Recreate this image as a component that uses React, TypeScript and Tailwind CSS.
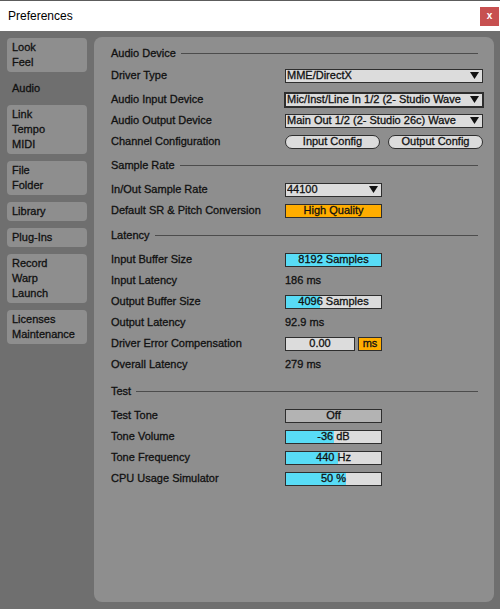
import type { ReactNode } from "react";

const navGroups = [
  ["Look", "Feel"],
  ["Audio"],
  ["Link", "Tempo", "MIDI"],
  ["File", "Folder"],
  ["Library"],
  ["Plug-Ins"],
  ["Record", "Warp", "Launch"],
  ["Licenses", "Maintenance"],
];

function Arrow() {
  return (
    <svg width="9" height="7" viewBox="0 0 9 7" className="shrink-0">
      <polygon points="0,0 9,0 4.5,7" fill="#111" />
    </svg>
  );
}

function Dropdown({ value, wide = true, focused = false }: { value: string; wide?: boolean; focused?: boolean }) {
  const size = wide
    ? focused
      ? "w-[200px] h-[16px] border-2 -ml-px"
      : "w-[198px] h-[14px] border"
    : "w-[97px] h-[14px] border";
  return (
    <div className={`${size} border-[#2e2e2e] bg-[#dcdcdc] flex items-center justify-between pl-[1px] pr-[3px] leading-none`}>
      <span className="whitespace-nowrap overflow-hidden">{value}</span>
      <Arrow />
    </div>
  );
}

function Field({ value, fill, bg = "bg-[#dcdcdc]", width = "w-[97px]" }: { value: string; fill?: number; bg?: string; width?: string }) {
  return (
    <div className={`relative ${width} h-[14px] border border-[#2e2e2e] ${bg} overflow-hidden`}>
      {fill !== undefined && <div className="absolute inset-y-0 left-0 bg-[#58dcf6]" style={{ width: `${fill}%` }} />}
      <div className="relative h-full flex items-center justify-center leading-none">{value}</div>
    </div>
  );
}

function Header({ title, className = "" }: { title: string; className?: string }) {
  return (
    <div className={`h-[21px] flex items-center gap-[5px] mr-[6px] ${className}`}>
      <span className="whitespace-nowrap">{title}</span>
      <div className="flex-1 h-px bg-[#4c4c4c]" />
    </div>
  );
}

function Row({ label, children, className = "" }: { label: string; children: ReactNode; className?: string }) {
  return (
    <div className={`h-[21px] flex items-center ${className}`}>
      <span className="w-[174px] shrink-0 whitespace-nowrap">{label}</span>
      {children}
    </div>
  );
}

export default function App() {
  return (
    <div className="w-[500px] h-[609px] bg-[#6f6f6f] flex flex-col text-[11px] text-[#111] font-['Liberation_Sans',Arial,sans-serif]">
      <div className="h-[31px] shrink-0 bg-white border-t border-[#5c5c5c] flex items-center justify-between pl-[8px] pr-[1px]">
        <span className="text-[12px] text-black">Preferences</span>
        <div className="w-[19px] h-[19px] bg-[#c75050] text-white text-[10px] font-bold flex items-center justify-center leading-none pb-[1px]">
          x
        </div>
      </div>

      <div className="flex-1 flex gap-[7px] px-[7px] pt-[6px] pb-[7px] min-h-0 [-webkit-text-stroke:0.3px_#111]">
        <div className="w-[80px] shrink-0 flex flex-col gap-[7px] mt-[1px]">
          {navGroups.map((group) => (
            <div
              key={group[0]}
              className={`rounded-[4px] px-[5px] py-[2px] ${group[0] === "Audio" ? "" : "bg-[#8e8e8e]"}`}
            >
              {group.map((item) => (
                <div key={item} className="h-[15px] leading-[15px]">
                  {item}
                </div>
              ))}
            </div>
          ))}
        </div>

        <div className="flex-1 bg-[#8e8e8e] rounded-[8px] pl-[17px] pr-[10px] pt-[6px]">
          <Header title="Audio Device" />
          <Row label="Driver Type" className="mt-[1px]">
            <Dropdown value="MME/DirectX" />
          </Row>
          <Row label="Audio Input Device" className="mt-[3px]">
            <Dropdown value="Mic/Inst/Line In 1/2 (2- Studio Wave" focused />
          </Row>
          <Row label="Audio Output Device">
            <Dropdown value="Main Out 1/2 (2- Studio 26c) Wave" />
          </Row>
          <Row label="Channel Configuration">
            <div className="flex gap-[8px]">
              <div className="w-[95px] h-[14px] rounded-full border border-[#2e2e2e] bg-[#dcdcdc] flex items-center justify-center leading-none">
                Input Config
              </div>
              <div className="w-[95px] h-[14px] rounded-full border border-[#2e2e2e] bg-[#dcdcdc] flex items-center justify-center leading-none">
                Output Config
              </div>
            </div>
          </Row>

          <Header title="Sample Rate" className="mt-[3px]" />
          <Row label="In/Out Sample Rate" className="mt-[3px]">
            <Dropdown value="44100" wide={false} />
          </Row>
          <Row label="Default SR & Pitch Conversion">
            <Field value="High Quality" bg="bg-[#ffad00]" />
          </Row>

          <Header title="Latency" className="mt-[4px]" />
          <Row label="Input Buffer Size" className="mt-[3px]">
            <Field value="8192 Samples" fill={100} />
          </Row>
          <Row label="Input Latency">
            <span>186 ms</span>
          </Row>
          <Row label="Output Buffer Size">
            <Field value="4096 Samples" fill={36} />
          </Row>
          <Row label="Output Latency">
            <span>92.9 ms</span>
          </Row>
          <Row label="Driver Error Compensation">
            <div className="flex gap-[3px]">
              <Field value="0.00" width="w-[70px]" />
              <Field value="ms" width="w-[24px]" bg="bg-[#ffad00]" />
            </div>
          </Row>
          <Row label="Overall Latency">
            <span>279 ms</span>
          </Row>

          <Header title="Test" className="mt-[6px]" />
          <Row label="Test Tone" className="mt-[3px]">
            <Field value="Off" bg="bg-[#b3b3b3]" />
          </Row>
          <Row label="Tone Volume">
            <Field value="-36 dB" fill={50} />
          </Row>
          <Row label="Tone Frequency">
            <Field value="440 Hz" fill={55} />
          </Row>
          <Row label="CPU Usage Simulator">
            <Field value="50 %" fill={63} />
          </Row>
        </div>
      </div>
    </div>
  );
}
